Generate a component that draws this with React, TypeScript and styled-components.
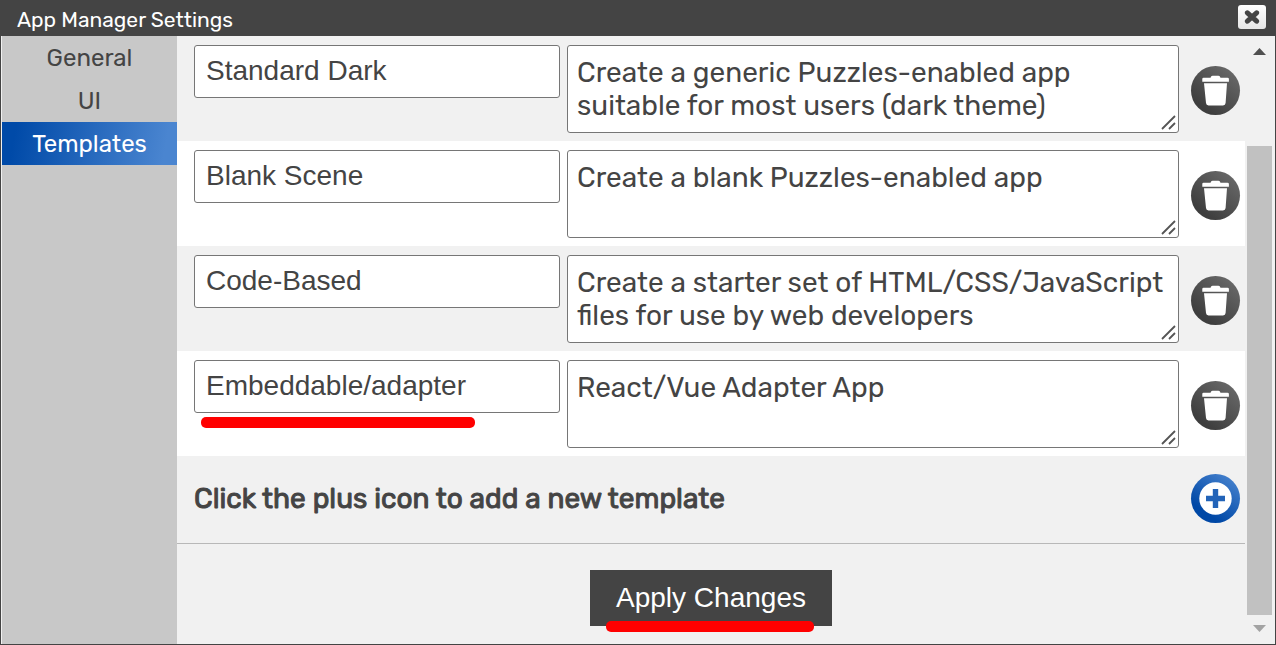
import React from "react";
import styled, { createGlobalStyle, css } from "styled-components";

const ui = `Rubik, Roboto, "Liberation Sans", sans-serif`;
const arial = `"Liberation Sans", Arial, sans-serif`;

const GlobalStyle = createGlobalStyle`
  *, *::before, *::after { box-sizing: border-box; }
  body { margin: 0; background: #fff; color: #444; font-family: ${ui}; }
  button, input, textarea { margin: 0; color: inherit; }
`;

const Dialog = styled.div`
  display: flex;
  flex-direction: column;
  min-height: 100vh;
  border: 1px solid #444;
  border-top: 0;
  background: #f1f1f1;
`;

const TitleBar = styled.header`
  display: flex;
  align-items: center;
  justify-content: space-between;
  height: 36px;
  padding: 0 9px 2px 16px;
  background: #444;
  color: #fff;
`;

const Title = styled.h1`
  margin: 0;
  padding-top: 5px;
  font-size: 21px;
  line-height: 24px;
  font-weight: 400;
`;

const CloseButton = styled.button`
  display: flex;
  align-items: center;
  justify-content: center;
  width: 28px;
  height: 24px;
  padding: 0;
  border: 0;
  border-radius: 3px;
  background: linear-gradient(#fff, #e6e6e6);
`;

const Body = styled.div`
  display: flex;
  flex: 1;
`;

const Sidebar = styled.nav`
  flex: none;
  width: 176px;
  border-left: 1px solid #f1f1f1;
  background: #c8c8c8;
`;

const Tab = styled.button<{ $active?: boolean }>`
  display: block;
  width: 100%;
  height: 43px;
  padding: 0;
  border: 0;
  background: none;
  font: 24px/42px ${ui};
  text-align: center;
  ${(p) =>
    p.$active &&
    css`
      background: linear-gradient(100deg, #004aa8 8%, #4a85d0 92%);
      color: #fff;
    `}
`;

const Content = styled.main`
  flex: 1;
  min-width: 0;
`;

const RoundButton = styled.button<{ $primary?: boolean }>`
  display: flex;
  flex: none;
  align-items: center;
  justify-content: center;
  align-self: center;
  width: 49px;
  height: 49px;
  padding: 0;
  border: 0;
  border-radius: 50%;
  background: ${(p) =>
    p.$primary
      ? "linear-gradient(35deg, #0048a6 25%, #4a85d0 95%)"
      : "linear-gradient(40deg, #3e3e3e 20%, #6c6c6c 95%)"};
  color: #fff;
`;

const Row = styled.div`
  display: flex;
  align-items: flex-start;
  padding: 9px 5px 8px 17px;
  &:nth-child(even) { background: #fff; }
  ${RoundButton} { margin-top: 2px; }
`;

const NameCell = styled.div`
  position: relative;
  flex: 366;
  min-width: 0;
  margin-right: 7px;
`;

const field = css`
  display: block;
  width: 100%;
  border: 1px solid #767676;
  border-radius: 3px;
  background: #fff;
`;

const NameInput = styled.input`
  ${field}
  height: 53px;
  padding: 0 11px 2px;
  font: 28px/33px ${arial};
`;

const DescriptionCell = styled.div`
  position: relative;
  flex: 612;
  min-width: 0;
  margin-right: 12px;
`;

const DescriptionInput = styled.textarea`
  ${field}
  height: 88px;
  padding: 10px 9px;
  font: 28px/33px ${ui};
  overflow: hidden;
  resize: none;
`;

const Grip = styled.svg`
  position: absolute;
  right: 3px;
  bottom: 3px;
  pointer-events: none;
`;

const AddRow = styled.div`
  display: flex;
  align-items: center;
  justify-content: space-between;
  height: 88px;
  padding: 0 5px 3px 17px;
  border-bottom: 1px solid #b8b8b8;
`;

const AddText = styled.p`
  margin: 0;
  font-size: 28px;
  line-height: 33px;
  -webkit-text-stroke: 1px #444;
`;

const Actions = styled.footer`
  display: flex;
  justify-content: center;
  padding: 26px 0 18px;
`;

const ApplyButton = styled.button`
  position: relative;
  height: 56px;
  padding: 0 26px;
  border: 0;
  background: #444;
  color: #fff;
  font: 28px/56px ${arial};
`;

const Underline = styled.span<{ $inset: string }>`
  position: absolute;
  inset: ${(p) => p.$inset};
  height: 11px;
  border-radius: 5px;
  background: #f00;
`;

const ScrollBar = styled.div`
  display: flex;
  flex: none;
  flex-direction: column;
  width: 30px;
  padding: 0 3px 0 2px;
`;

const ScrollArrow = styled.svg`
  flex: none;
  display: block;
`;

const ScrollGap = styled.div`
  flex: 84;
`;

const ScrollThumb = styled.div`
  flex: 469;
  background: #c1c1c1;
`;

const TrashIcon = () => (
  <svg width="49" height="49" viewBox="0 0 49 49" fill="currentColor" aria-hidden="true">
    <path d="M12.5 11.7 H19.5 Q20 9.8 21.5 9.8 H27.5 Q29 9.8 29.5 11.7 H36.5 Q37.9 11.7 37.9 13 V15.8 H11.3 V13 Q11.3 11.7 12.5 11.7Z" />
    <path d="M13 17.2 H36 L34.6 37 Q34.4 39.4 32 39.4 H17.5 Q15.2 39.4 15 37Z" />
  </svg>
);

const PlusIcon = () => (
  <svg width="49" height="49" viewBox="0 0 49 49" aria-hidden="true">
    <circle cx="24.5" cy="24.5" r="16.2" fill="#fff" />
    <path d="M21.8 15 H27.2 V21.8 H34 V27.2 H27.2 V34 H21.8 V27.2 H15 V21.8 H21.8Z" fill="#2263b8" />
  </svg>
);

const templates = [
  { name: "Standard Dark", text: "Create a generic Puzzles-enabled app\nsuitable for most users (dark theme)" },
  { name: "Blank Scene", text: "Create a blank Puzzles-enabled app" },
  { name: "Code-Based", text: "Create a starter set of HTML/CSS/JavaScript\nfiles for use by web developers" },
  { name: "Embeddable/adapter", text: "React/Vue Adapter App", marked: true },
];

export default function App() {
  return (
    <>
      <GlobalStyle />
      <Dialog role="dialog" aria-labelledby="title">
        <TitleBar>
          <Title id="title">App Manager Settings</Title>
          <CloseButton aria-label="Close">
            <svg width="16" height="16" viewBox="0 0 16 16" stroke="#444" strokeWidth="5" strokeLinecap="round" aria-hidden="true">
              <path d="M3.4 3.8 L12.6 12.2 M12.6 3.8 L3.4 12.2" />
            </svg>
          </CloseButton>
        </TitleBar>
        <Body>
          <Sidebar>
            <Tab>General</Tab>
            <Tab>UI</Tab>
            <Tab $active aria-current="page">Templates</Tab>
          </Sidebar>
          <Content>
            {templates.map((t) => (
              <Row key={t.name}>
                <NameCell>
                  <NameInput aria-label="Template name" defaultValue={t.name} />
                  {t.marked && <Underline $inset="auto 85px -15px 7px" />}
                </NameCell>
                <DescriptionCell>
                  <DescriptionInput aria-label="Template description" defaultValue={t.text} />
                  <Grip width="15" height="15" viewBox="0 0 15 15" stroke="#555" strokeWidth="1.8" aria-hidden="true">
                    <path d="M1 14 L14 1 M8 14 L14 8" />
                  </Grip>
                </DescriptionCell>
                <RoundButton aria-label={`Delete ${t.name}`}>
                  <TrashIcon />
                </RoundButton>
              </Row>
            ))}
            <AddRow>
              <AddText>Click the plus icon to add a new template</AddText>
              <RoundButton $primary aria-label="Add template">
                <PlusIcon />
              </RoundButton>
            </AddRow>
            <Actions>
              <ApplyButton>
                Apply Changes
                <Underline $inset="auto 18px -6px 16px" />
              </ApplyButton>
            </Actions>
          </Content>
          <ScrollBar aria-hidden="true">
            <ScrollArrow width="25" height="26" viewBox="0 0 25 26" fill="#505050">
              <path d="M6 19 L12.5 12 L19 19Z" />
            </ScrollArrow>
            <ScrollGap />
            <ScrollThumb />
            <ScrollArrow width="25" height="29" viewBox="0 0 25 29" fill="#a3a3a3">
              <path d="M6 10 L12.5 17 L19 10Z" />
            </ScrollArrow>
          </ScrollBar>
        </Body>
      </Dialog>
    </>
  );
}
